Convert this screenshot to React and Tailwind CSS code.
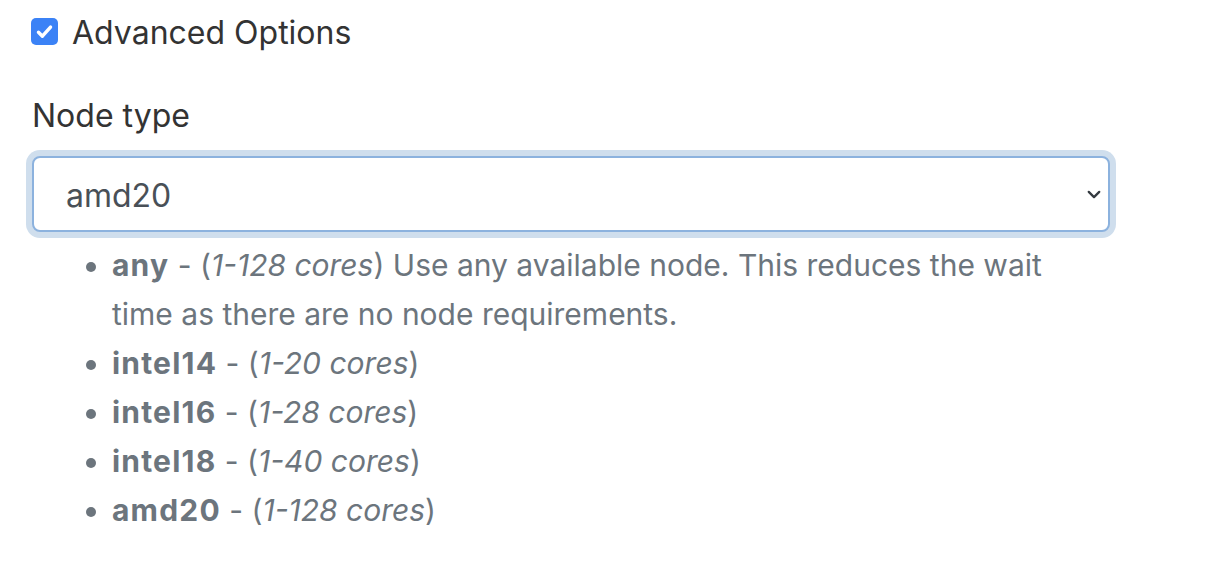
import React from "react";

const nodes = [
  { name: "intel14", cores: "1-20 cores" },
  { name: "intel16", cores: "1-28 cores" },
  { name: "intel18", cores: "1-40 cores" },
  { name: "amd20", cores: "1-128 cores" },
];

export default function App() {
  return (
    <div className="min-h-[566px] w-[1210px] bg-white pl-[32px] pt-[9px] font-['Inter','Noto_Sans',sans-serif] text-[#333]">
      {/* Advanced options checkbox */}
      <label className="flex items-center gap-[14px] text-[32px] leading-[48px]">
        <span className="-ml-px -mt-[4px] flex h-[27px] w-[27px] items-center justify-center rounded-[5px] bg-[#3b82f6]">
          <svg viewBox="0 0 16 16" className="h-[21px] w-[21px]" fill="none">
            <path d="M3.4 8.6l3 3 6.2-7" stroke="white" strokeWidth="2.6" strokeLinecap="round" strokeLinejoin="round" />
          </svg>
        </span>
        Advanced Options
      </label>

      <div className="mt-[35px] w-[1078px]">
        <div className="mb-[16px] text-[32px] leading-[48px]">Node type</div>

        {/* Select */}
        <div className="relative flex h-[76px] items-center rounded-[8px] border-2 border-[#8cb2de] bg-white pl-[32px] pt-[3px] text-[32px] text-[#495057] shadow-[0_0_0_6px_#cfdeed]">
          amd20
          <svg viewBox="0 0 16 10" className="absolute right-[7px] top-[32px] h-[9px] w-[14px]" fill="none">
            <path d="M2 2l6 6 6-6" stroke="#343a40" strokeWidth="2.6" strokeLinecap="round" strokeLinejoin="round" />
          </svg>
        </div>

        {/* Help text */}
        <ul className="mt-[9px] list-disc pl-[80px] text-[30px] leading-[49px] text-[#6c757d]">
          <li>
            <b className="font-bold tracking-[0.04em]">any</b> - (<i>1-128 cores</i>) Use any available node. This reduces the wait time as there are no node requirements.
          </li>
          {nodes.map((n) => (
            <li key={n.name}>
              <b className="font-bold tracking-[0.04em]">{n.name}</b> - (<i>{n.cores}</i>)
            </li>
          ))}
        </ul>
      </div>
    </div>
  );
}
